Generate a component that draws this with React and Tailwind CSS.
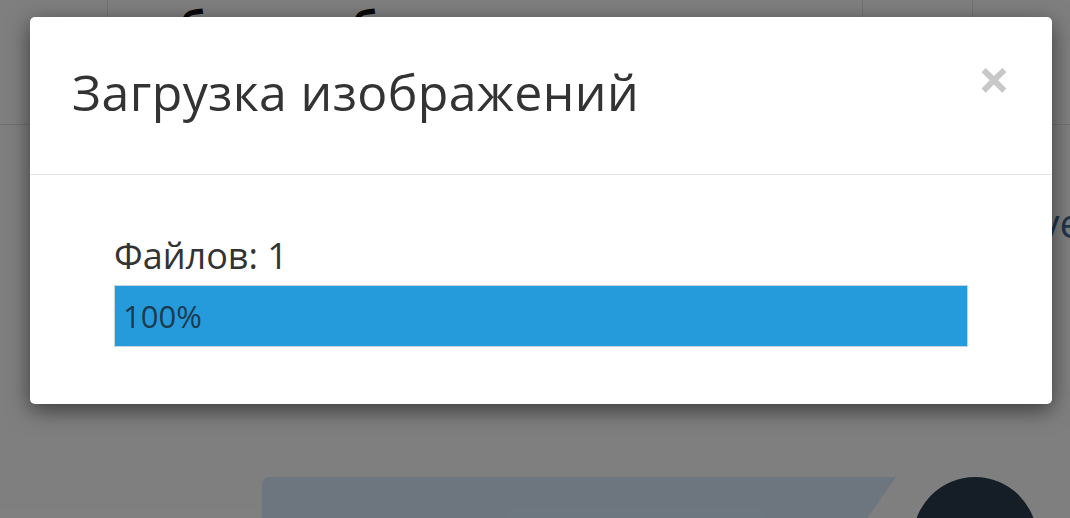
import React from 'react';

const font = { fontFamily: '"Open Sans", "Noto Sans", sans-serif' };

// страница под модальным окном
const Page = () => (
  <div className="relative h-[518px] w-[1070px] overflow-hidden bg-white">
    <header className="flex h-[125px] border-b border-[#e4e4e4]">
      <div className="w-[108px] border-r border-[#e4e4e4]" />
      <div className="flex flex-1 gap-[147px] pl-[72px] pt-[4px] text-[40px] font-bold leading-none text-[#111]">
        <span>б</span>
        <span>б</span>
      </div>
      <div className="w-[110px] border-l border-[#e4e4e4]" />
      <div className="w-[98px] border-l border-[#e4e4e4]" />
    </header>
    <div className="flex justify-end pt-[78px] text-[40px] leading-none text-[#3e6a96]">
      <span className="mr-[-12px]">уе</span>
    </div>
    <div className="absolute left-[262px] top-[477px] flex w-[800px] items-start gap-[17px]">
      <div className="relative h-[80px] w-[606px] rounded-tl-[8px] bg-[#daedff]">
        <div className="absolute right-[-28px] top-0 h-0 w-0 border-l-[28px] border-t-[40px] border-l-transparent border-t-[#daedff] [transform:scaleX(-1)]" />
      </div>
      <div className="ml-[28px] h-[124px] w-[124px] rounded-full bg-[#2a3a4c]" />
    </div>
  </div>
);

export default function App() {
  return (
    <div className="relative h-[518px] w-[1070px] overflow-hidden" style={font}>
      <Page />
      <div className="absolute inset-0 bg-black/50">
        <div className="ml-[30px] mt-[17px] w-[1022px] rounded-[5px] bg-white shadow-[0_6px_22px_rgba(0,0,0,0.55)]">
          <div className="flex h-[158px] items-start justify-between border-b border-[#e5e5e5] pl-[42px] pr-[42px]">
            <h1 className="mt-[47px] text-[50px] leading-[56px] tracking-[0.4px] text-[#333]">
              Загрузка изображений
            </h1>
            <button className="mt-[33px] text-[56px] font-bold leading-none text-[#c8c8c8]">×</button>
          </div>
          <div className="px-[84px] pb-[57px] pt-[60px]">
            <div className="text-[36px] leading-[42px] text-[#333]">Файлов: 1</div>
            <div className="mt-[8px] h-[62px] border border-[#c9d6dc] bg-[#259bdb] p-px">
              <div className="flex h-full items-center pl-[7px] text-[31px] text-[#1d3b50]">100%</div>
            </div>
          </div>
        </div>
      </div>
    </div>
  );
}
